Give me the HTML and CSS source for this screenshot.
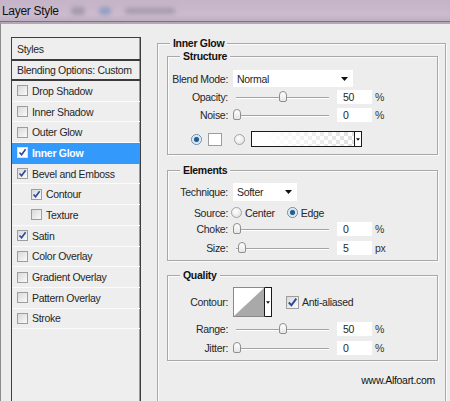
FILE: index.html
```html
<!DOCTYPE html>
<html>
<head>
<meta charset="utf-8">
<link rel="stylesheet" href="styles.css">
</head>
<body>
<div class="titlebar">
  <span class="title">Layer Style</span>
  <span class="blur b1"></span>
  <span class="blur b2"></span>
  <span class="blur b3"></span>
</div>
<div class="dialog">
  <div class="styles-panel">
    <div class="hdr hdr-styles">Styles</div>
    <div class="hdr hdr-blend">Blending Options: Custom</div>
    <ul class="effects">
      <li><span class="cb"></span>Drop Shadow</li>
      <li><span class="cb"></span>Inner Shadow</li>
      <li><span class="cb"></span>Outer Glow</li>
      <li class="active"><span class="cb"><svg viewBox="0 0 9 9"><path d="M1.5 4.5 L3.6 6.8 L7.6 1.3" /></svg></span>Inner Glow</li>
      <li><span class="cb"><svg viewBox="0 0 9 9"><path d="M1.5 4.5 L3.6 6.8 L7.6 1.3" /></svg></span>Bevel and Emboss</li>
      <li class="sub"><span class="cb"><svg viewBox="0 0 9 9"><path d="M1.5 4.5 L3.6 6.8 L7.6 1.3" /></svg></span>Contour</li>
      <li class="sub"><span class="cb"></span>Texture</li>
      <li><span class="cb"><svg viewBox="0 0 9 9"><path d="M1.5 4.5 L3.6 6.8 L7.6 1.3" /></svg></span>Satin</li>
      <li><span class="cb"></span>Color Overlay</li>
      <li><span class="cb"></span>Gradient Overlay</li>
      <li><span class="cb"></span>Pattern Overlay</li>
      <li><span class="cb"></span>Stroke</li>
    </ul>
  </div>

  <fieldset class="group outer">
    <legend>Inner Glow</legend>

    <fieldset class="group structure">
      <legend>Structure</legend>
      <div class="row r-blend">
        <span class="lbl">Blend Mode:</span>
        <span class="select sel-blend">Normal<svg class="arrow" viewBox="0 0 7 4"><path d="M0 0 H7 L3.5 4 Z"/></svg></span>
      </div>
      <div class="row r-opacity">
        <span class="lbl">Opacity:</span>
        <span class="slider"><span class="track"></span><span class="knob" style="left:46px"></span></span>
        <span class="num">50</span><span class="unit">%</span>
      </div>
      <div class="row r-noise">
        <span class="lbl">Noise:</span>
        <span class="slider"><span class="track"></span><span class="knob" style="left:0px"></span></span>
        <span class="num">0</span><span class="unit">%</span>
      </div>
      <div class="row r-color">
        <span class="radio on r-first"></span>
        <span class="swatch"></span>
        <span class="radio r-second"></span>
        <span class="gradient"></span><span class="grad-arrow"><svg viewBox="0 0 5 3"><path d="M0 0 H5 L2.5 3 Z"/></svg></span>
      </div>
    </fieldset>

    <fieldset class="group elements">
      <legend>Elements</legend>
      <div class="row r-tech">
        <span class="lbl">Technique:</span>
        <span class="select sel-tech">Softer<svg class="arrow" viewBox="0 0 7 4"><path d="M0 0 H7 L3.5 4 Z"/></svg></span>
      </div>
      <div class="row r-source">
        <span class="lbl">Source:</span>
        <span class="radio r-center"></span><span class="opt">Center</span>
        <span class="radio on r-edge"></span><span class="opt">Edge</span>
      </div>
      <div class="row r-choke">
        <span class="lbl">Choke:</span>
        <span class="slider"><span class="track"></span><span class="knob" style="left:0px"></span></span>
        <span class="num">0</span><span class="unit">%</span>
      </div>
      <div class="row r-size">
        <span class="lbl">Size:</span>
        <span class="slider"><span class="track"></span><span class="knob" style="left:5px"></span></span>
        <span class="num">5</span><span class="unit">px</span>
      </div>
    </fieldset>

    <fieldset class="group quality">
      <legend>Quality</legend>
      <div class="row r-contour">
        <span class="lbl">Contour:</span>
        <span class="contour"><svg viewBox="0 0 30 28" preserveAspectRatio="none"><path d="M0 28 L30 0 L30 28 Z"/></svg></span><span class="contour-arrow"><svg viewBox="0 0 5 3"><path d="M0 0 H5 L2.5 3 Z"/></svg></span>
        <span class="cb big"><svg viewBox="0 0 9 9"><path d="M1.5 4.5 L3.6 6.8 L7.6 1.3" /></svg></span><span class="opt">Anti-aliased</span>
      </div>
      <div class="row r-range">
        <span class="lbl">Range:</span>
        <span class="slider"><span class="track"></span><span class="knob" style="left:46px"></span></span>
        <span class="num">50</span><span class="unit">%</span>
      </div>
      <div class="row r-jitter">
        <span class="lbl">Jitter:</span>
        <span class="slider"><span class="track"></span><span class="knob" style="left:0px"></span></span>
        <span class="num">0</span><span class="unit">%</span>
      </div>
    </fieldset>

    <div class="credit">www.Alfoart.com</div>
  </fieldset>
</div>
</body>
</html>
```

FILE: styles.css
```css
html, body {
  margin: 0;
  padding: 0;
}
body {
  width: 450px;
  height: 401px;
  overflow: hidden;
  background: #ededed;
  font-family: "Liberation Sans", Arial, sans-serif;
  font-size: 10.5px;
  letter-spacing: -0.3px;
  color: #262626;
}

/* title bar */
.titlebar {
  height: 21px;
  background: linear-gradient(#c5b3c7, #cbbbcd 70%, #bfaec2);
  border-bottom: 1px solid #7f7283;
  display: flex;
  align-items: center;
  overflow: hidden;
}
.title {
  padding-left: 2px;
  font-size: 12px;
  letter-spacing: -0.3px;
  color: #111;
  line-height: 20px;
}
.blur {
  height: 8px;
  border-radius: 4px;
  filter: blur(2px);
  flex: none;
}
.b1 { width: 14px; margin-left: 12px; background: rgba(150, 140, 160, 0.7); }
.b2 { width: 12px; margin-left: 14px; background: rgba(110, 140, 190, 0.6); }
.b3 { width: 50px; margin-left: 14px; background: rgba(140, 130, 150, 0.55); height: 6px; }

/* dialog body */
.dialog {
  border-top: 2px solid #b2a8b4;
  border-left: 1px solid #8c8c8c;
  padding: 13px 0 0 10px;
  display: flex;
  align-items: flex-start;
}

/* styles list */
.styles-panel {
  width: 130px;
  height: 380px;
  box-sizing: border-box;
  border: 1px solid #3e3e3e;
  box-shadow: inset -1px 0 0 #9a9a9a;
  background: #eeeeee;
  flex: none;
}
.hdr {
  padding-left: 5px;
  display: flex;
  align-items: center;
  border-bottom: 2px solid #3a3a3a;
  box-sizing: border-box;
}
.hdr-styles { height: 23px; }
.hdr-blend { height: 20px; }
.effects {
  list-style: none;
  margin: 0;
  padding: 0;
}
.effects li {
  height: 20.7px;
  box-sizing: border-box;
  border-bottom: 1px solid #fbfbfb;
  display: flex;
  align-items: center;
  padding-left: 5px;
}
.effects li.sub { padding-left: 19px; }
.effects li.active {
  background: #3399fa;
  color: #fff;
  font-weight: bold;
  border-bottom-color: #3399fa;
}
.cb {
  width: 9px;
  height: 9px;
  border: 1px solid #9d9d9d;
  background: linear-gradient(135deg, #d9d9d9, #fafafa);
  margin-right: 4px;
  flex: none;
  display: flex;
}
.active .cb { background: #fff; border-color: #cfe3f7; }
.cb svg { width: 9px; height: 9px; }
.cb path {
  fill: none;
  stroke: #28489a;
  stroke-width: 1.6;
}

/* fieldsets */
.group {
  margin: 0;
  border: 1px solid #a8a8a8;
  box-shadow: inset 1px 1px 0 #fbfbfb, 1px 1px 0 #fbfbfb;
  box-sizing: border-box;
  min-width: 0;
}
.group > legend {
  font-weight: bold;
  line-height: 13px;
  padding: 0 3px;
  margin-left: 2px;
  background: #ededed;
  color: #111;
}
.outer {
  margin-left: 16px;
  width: 289px;
  height: 380px;
  padding: 0 7px 0 9px;
  flex: none;
}
.outer > legend { margin-left: 3px; }
.structure, .elements, .quality {
  width: 271px;
  padding: 0 10px;
}
.structure { padding-bottom: 7px; }
.elements { margin-top: 9px; padding-bottom: 5px; }
.quality { margin-top: 8px; padding-bottom: 5px; }

/* rows */
.row {
  display: flex;
  align-items: center;
}
.lbl {
  width: 62px;
  margin-left: -12px;
  text-align: right;
  margin-right: 5px;
  flex: none;
  white-space: nowrap;
}
.r-blend { margin-top: 7px; height: 17px; }
.r-opacity { margin-top: 3px; height: 14px; }
.r-noise { margin-top: 4px; height: 14px; }
.r-color { margin-top: 9px; height: 16px; }

.r-tech { margin-top: 6px; height: 18px; }
.r-source { margin-top: 5px; height: 13px; }
.r-choke { margin-top: 3px; height: 14px; }
.r-size { margin-top: 5px; height: 14px; }

.r-contour { margin-top: 5px; height: 30px; }
.r-range { margin-top: 5px; height: 14px; }
.r-jitter { margin-top: 5px; height: 14px; }

.select {
  background: #fff;
  height: 100%;
  box-sizing: border-box;
  padding-left: 4px;
  display: flex;
  align-items: center;
  position: relative;
  flex: none;
}
.sel-blend { width: 120px; }
.sel-tech { width: 64px; }
.select .arrow {
  width: 7px;
  height: 4px;
  margin-left: auto;
  margin-right: 5px;
}
.arrow path, .grad-arrow path, .contour-arrow path { fill: #111; }

/* sliders */
.slider {
  position: relative;
  width: 100px;
  height: 14px;
  flex: none;
}
.track {
  position: absolute;
  left: 3px;
  width: 93px;
  top: 7px;
  height: 1px;
  background: #a3a3a3;
  border-bottom: 1px solid #fff;
}
.knob {
  position: absolute;
  top: 1px;
  width: 8px;
  height: 11px;
  box-sizing: border-box;
  border: 1px solid #8f8f8f;
  border-radius: 4px 4px 2px 2px;
  background: linear-gradient(#ffffff, #e6e6e6);
}
.num {
  margin-left: 4px;
  width: 35px;
  height: 14px;
  box-sizing: border-box;
  background: #fff;
  padding-left: 6px;
  display: flex;
  align-items: center;
  flex: none;
}
.unit {
  margin-left: 3px;
  color: #333;
}

/* radios */
.radio {
  width: 11px;
  height: 11px;
  box-sizing: border-box;
  border-radius: 50%;
  border: 1px solid #a4a4a4;
  background: radial-gradient(circle at 40% 35%, #ffffff, #dcdcdc);
  flex: none;
}
.radio.on {
  border-color: #6b8aa6;
  background: radial-gradient(circle, #1c4f7d 0, #2f6d9c 2.2px, #cfe0ee 3px, #ffffff 5px);
}
.r-first { margin-left: 13px; }
.swatch {
  margin-left: 6px;
  width: 14px;
  height: 13px;
  box-sizing: border-box;
  background: #fff;
  border: 1px solid #9c9c9c;
  flex: none;
}
.r-second { margin-left: 12px; }
.gradient {
  margin-left: 6px;
  width: 104px;
  height: 16px;
  box-sizing: border-box;
  border: 1px solid #1a1a1a;
  background:
    linear-gradient(to right, #ffffff 15%, rgba(255, 255, 255, 0.35) 100%),
    repeating-conic-gradient(#cfcfcf 0 25%, #ffffff 0 50%) 0 0 / 8px 8px;
  flex: none;
}
.grad-arrow, .contour-arrow {
  width: 7px;
  height: 16px;
  box-sizing: border-box;
  border: 1px solid #1a1a1a;
  border-left: none;
  background: #fff;
  display: flex;
  align-items: center;
  justify-content: center;
  flex: none;
}
.grad-arrow svg, .contour-arrow svg { width: 4px; height: 3px; }

.r-source .lbl { margin-right: 3px; }
.r-center { margin-left: 0; }
.opt { margin-left: 3px; }
.r-edge { margin-left: 12px; }

.contour {
  width: 32px;
  height: 30px;
  box-sizing: border-box;
  border: 1px solid #8a8a8a;
  border-right: 1px solid #1a1a1a;
  background: #fff;
  display: flex;
  flex: none;
}
.contour svg { width: 100%; height: 100%; }
.contour path { fill: #a9a9a9; }
.contour-arrow { height: 30px; }
.cb.big {
  width: 11px;
  height: 11px;
  margin-left: 14px;
  margin-right: 0;
}
.cb.big svg { width: 11px; height: 11px; }

.credit {
  margin-top: 13px;
  line-height: 13px;
  text-align: right;
  padding-right: 3px;
  color: #111;
}
```
